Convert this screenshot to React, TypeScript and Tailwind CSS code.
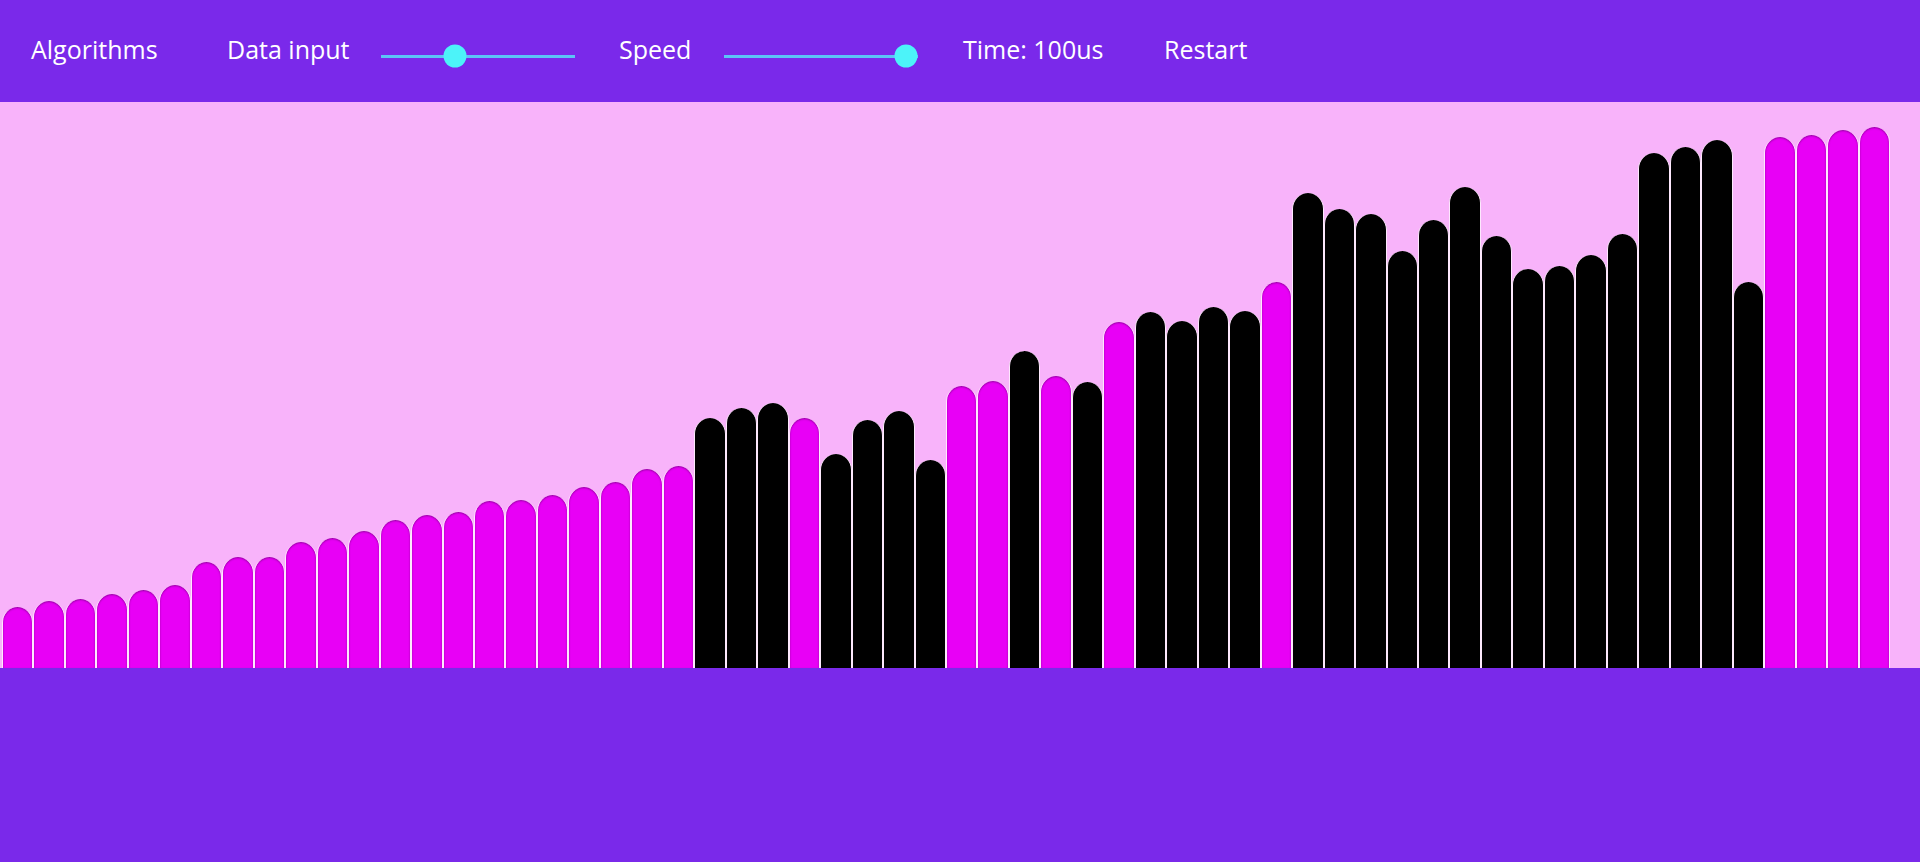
import React from "react";

type Bar = { h: number; active: boolean };

// heights in px, measured off the sorted-run snapshot
const heights = [
  61, 67, 69, 74, 78, 83, 106, 111, 111, 126, 130, 137, 148, 153, 156, 167,
  168, 173, 181, 186, 199, 202, 250, 260, 265, 250, 214, 248, 257, 208, 282,
  287, 317, 292, 286, 346, 356, 347, 361, 357, 386, 475, 459, 454, 417, 448,
  481, 432, 399, 402, 413, 434, 515, 521, 528, 386, 531, 533, 538, 541,
];

const blackIdx = new Set([
  22, 23, 24, 26, 27, 28, 29, 32, 34, 36, 37, 38, 39, 41, 42, 43, 44, 45, 46,
  47, 48, 49, 50, 51, 52, 53, 54, 55,
]);

const bars: Bar[] = heights.map((h, i) => ({ h, active: !blackIdx.has(i) }));

const Slider: React.FC<{ thumb: number }> = ({ thumb }) => (
  <div className="relative mt-[10px] h-[3px] w-[194px] bg-[#5cc4f6]">
    <div
      className="absolute top-1/2 h-[23px] w-[23px] -translate-x-1/2 -translate-y-1/2 rounded-full bg-[#4cf3f9]"
      style={{ left: thumb }}
    />
  </div>
);

const NavText: React.FC<{ w: string; children: React.ReactNode }> = ({
  w,
  children,
}) => (
  <span className={`${w} inline-block shrink-0 whitespace-nowrap mb-[4px]`}>
    {children}
  </span>
);

export default function App() {
  return (
    <div className="flex h-[862px] w-[1920px] flex-col bg-[#7a29ea] font-['Open_Sans',sans-serif] text-white">
      <header className="flex h-[102px] shrink-0 items-center pl-[31px] text-[25px] leading-none">
        <NavText w="w-[128px]">Algorithms</NavText>
        <div className="ml-[68px] flex">
          <NavText w="w-[125px]">Data input</NavText>
        </div>
        <div className="ml-[29px]">
          <Slider thumb={74} />
        </div>
        <div className="ml-[44px] flex">
          <NavText w="w-[75px]">Speed</NavText>
        </div>
        <div className="ml-[30px]">
          <Slider thumb={182} />
        </div>
        <div className="ml-[45px] flex">
          <NavText w="w-[133px]">Time: 100us</NavText>
        </div>
        <div className="ml-[68px] flex">
          <NavText w="w-[83px]">Restart</NavText>
        </div>
      </header>

      <main className="flex h-[566px] shrink-0 items-end bg-[#f8b3fa] pl-[2px]">
        <div className="grid w-[1888px] grid-cols-[repeat(60,minmax(0,1fr))] items-end">
          {bars.map((b, i) => (
            <div
              key={i}
              className={`rounded-t-full border-x border-[#fde8fd] ${
                b.active
                  ? "bg-[#e800f6] shadow-[inset_0_1px_2px_rgba(110,0,120,0.7)]"
                  : "bg-black"
              }`}
              style={{ height: b.h }}
            />
          ))}
        </div>
      </main>

      <div className="flex-1" />
    </div>
  );
}
